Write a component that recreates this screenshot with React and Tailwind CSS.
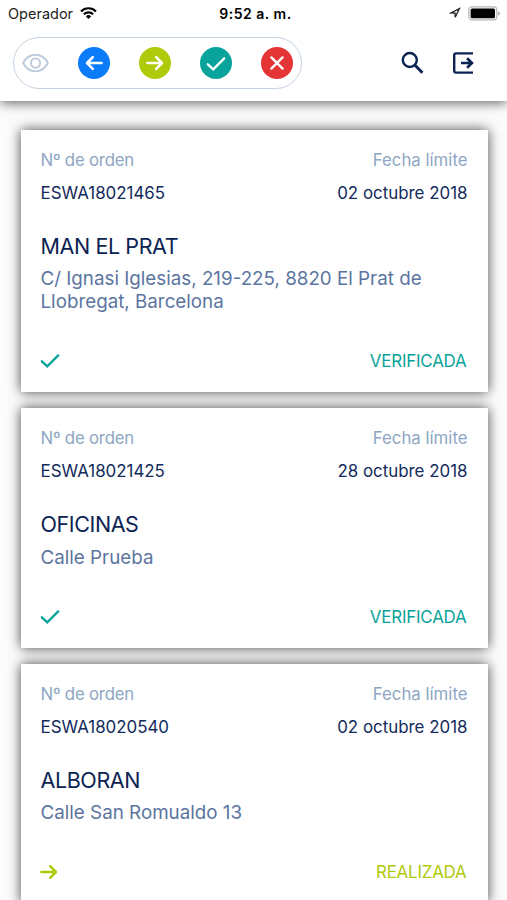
import React from "react";

const orders = [
    {
        id: "ESWA18021465",
        date: "02 octubre 2018",
        name: "MAN EL PRAT",
        address: "C/ Ignasi Iglesias, 219-225, 8820 El Prat de Llobregat, Barcelona",
        status: "VERIFICADA",
    },
    {
        id: "ESWA18021425",
        date: "28 octubre 2018",
        name: "OFICINAS",
        address: "Calle Prueba",
        status: "VERIFICADA",
    },
    {
        id: "ESWA18020540",
        date: "02 octubre 2018",
        name: "ALBORAN",
        address: "Calle San Romualdo 13",
        status: "REALIZADA",
    },
];

const CheckIcon = ({ className = "" }) => (
    <svg className={className} viewBox="0 0 20 16" fill="none" stroke="currentColor" strokeWidth="2.3" strokeLinecap="round" strokeLinejoin="miter" aria-hidden="true">
        <path d="M1.8 8.3 7.3 13.3 18.2 2.4" />
    </svg>
);

const ArrowIcon = ({ className = "" }) => (
    <svg className={className} viewBox="0 0 18 16" fill="none" stroke="currentColor" strokeWidth="2.5" strokeLinecap="round" strokeLinejoin="round" aria-hidden="true">
        <path d="M1.4 8h14.4M10.2 2.2 16 8l-5.8 5.8" />
    </svg>
);

const StatusBar = () => (
    <div className="flex h-7 items-center justify-between pl-2 pr-[7px] text-black">
        <div className="flex flex-1 items-center gap-[7px]">
            <span className="text-[14.5px] leading-none text-[#222]">Operador</span>
            <svg className="-mt-0.5 h-3 w-[17px]" viewBox="0 0 17 12" fill="none" stroke="currentColor" strokeWidth="2.1" aria-hidden="true">
                <path d="M1 4.4a10.6 10.6 0 0 1 15 0M3.8 7.3a6.7 6.7 0 0 1 9.4 0" />
                <path d="M8.5 12 5.9 9.4a3.7 3.7 0 0 1 5.2 0Z" fill="currentColor" stroke="none" />
            </svg>
        </div>
        <span className="pl-[3px] text-[14px] font-semibold leading-none tracking-[0.5px]">9:52 a. m.</span>
        <div className="-mt-0.5 flex flex-1 items-center justify-end gap-[7px]">
            <svg className="h-3 w-3" viewBox="0 0 12 12" fill="none" stroke="#222" strokeWidth="1.3" strokeLinejoin="miter" aria-hidden="true">
                <path d="M10.4 1.6 1.8 6l4.2.2.2 4Z" />
            </svg>
            <svg className="h-[15px] w-8" viewBox="0 0 32 15" aria-hidden="true">
                <rect x="0.8" y="0.8" width="28" height="13" rx="3" fill="#fff" stroke="#b5b5b5" strokeWidth="1.2" />
                <rect x="2.6" y="2.6" width="24.4" height="9.6" rx="1.5" fill="#000" />
                <path d="M30.2 5.4q1.6.6 1.6 2t-1.6 2Z" fill="#999" />
            </svg>
        </div>
    </div>
);

const FilterBar = () => (
    <div className="flex h-[52px] w-[289px] items-center justify-between rounded-full border-[1.5px] border-[#c5d3e1] pl-2 pr-2">
        <button type="button" aria-label="Ver todas" className="text-[#bccadc]">
            <svg className="h-5 w-[27px]" viewBox="0 0 27 20" fill="none" stroke="currentColor" strokeWidth="1.9" aria-hidden="true">
                <path d="M1.1 10C6.8-1.1 20.2-1.1 25.9 10 20.2 21.1 6.8 21.1 1.1 10Z" strokeLinejoin="round" />
                <circle cx="13.5" cy="10" r="4.6" />
            </svg>
        </button>
        <button type="button" aria-label="Pendientes" className="flex size-8 items-center justify-center rounded-full bg-[#0a7cfa] text-white">
            <ArrowIcon className="h-4 w-[18px] rotate-180" />
        </button>
        <button type="button" aria-label="Realizadas" className="flex size-8 items-center justify-center rounded-full bg-[#aeca0b] text-white">
            <ArrowIcon className="h-4 w-[18px]" />
        </button>
        <button type="button" aria-label="Verificadas" className="flex size-8 items-center justify-center rounded-full bg-[#08a39b] text-white">
            <CheckIcon className="mt-0.5 h-4 w-5" />
        </button>
        <button type="button" aria-label="Rechazadas" className="flex size-8 items-center justify-center rounded-full bg-[#e53436] text-white">
            <svg className="size-4" viewBox="0 0 16 16" fill="none" stroke="currentColor" strokeWidth="2.4" strokeLinecap="round" aria-hidden="true">
                <path d="m2.4 2.4 11.2 11.2M13.6 2.4 2.4 13.6" />
            </svg>
        </button>
    </div>
);

const OrderCard = ({ order }) => {
    const verified = order.status === "VERIFICADA";

    return (
        <article className="bg-white px-5 pb-5 pt-[19px] shadow-[0_0_12px_rgba(0,0,0,0.72)]">
            <div className="flex justify-between text-[16.8px] leading-[22px] text-[#8ea6c3]">
                <span className="tracking-[-0.2px]">Nº de orden</span>
                <span>Fecha límite</span>
            </div>
            <div className="mt-[11px] flex justify-between text-[16.9px] leading-[22px] text-[#122a5c]">
                <span>{order.id}</span>
                <span>{order.date}</span>
            </div>
            <h2 className="mt-[27px] text-[21.5px] leading-[30px] tracking-[-0.4px] text-[#0b2352]">{order.name}</h2>
            <p className="mt-[6.5px] text-[18.8px] leading-[23px] text-[#5b75a0]">{order.address}</p>
            <div className={`mt-[37px] flex h-[22px] items-center justify-between pr-px text-[16.9px] tracking-[-0.2px] ${verified ? "text-[#08a39b]" : "text-[#aeca0b]"}`}>
                {verified ? <CheckIcon className="-ml-px h-4 w-5" /> : <ArrowIcon className="-ml-px h-4 w-[18px]" />}
                <span className="pt-[1.5px]">{order.status}</span>
            </div>
        </article>
    );
};

const App = () => {
    return (
        <div className="flex h-[900px] w-full flex-col overflow-hidden bg-[#fcfcfc] font-['Inter',sans-serif]">
            <header className="relative z-10 h-[101px] shrink-0 bg-white shadow-[0_1px_12px_rgba(0,0,0,0.7)]">
                <StatusBar />
                <div className="flex items-center justify-between pl-[13px] pr-[33px] pt-[9px]">
                    <FilterBar />
                    <div className="flex items-center gap-7 text-[#0b2352]">
                        <button type="button" aria-label="Buscar">
                            <svg className="size-6" viewBox="0 0 24 24" fill="none" stroke="currentColor" strokeWidth="2.4" aria-hidden="true">
                                <circle cx="9.8" cy="9" r="7" />
                                <path d="m14.8 14 7.6 7.8" strokeWidth="2.9" />
                            </svg>
                        </button>
                        <button type="button" aria-label="Salir">
                            <svg className="h-6 w-[22px]" viewBox="0 0 22 24" fill="none" stroke="currentColor" strokeWidth="2.4" aria-hidden="true">
                                <path d="M21 2.4H4Q2.2 2.4 2.2 4.2v15.6q0 1.8 1.8 1.8h17" />
                                <path d="M9 12h10.8M15.1 7.2l4.8 4.8-4.8 4.8" strokeWidth="2.7" />
                            </svg>
                        </button>
                    </div>
                </div>
            </header>
            <main className="flex flex-col gap-4 pl-[20.5px] pr-[19.5px] pt-[28.5px]">
                {orders.map((order) => (
                    <OrderCard key={order.id} order={order} />
                ))}
            </main>
        </div>
    );
};

export default App;
